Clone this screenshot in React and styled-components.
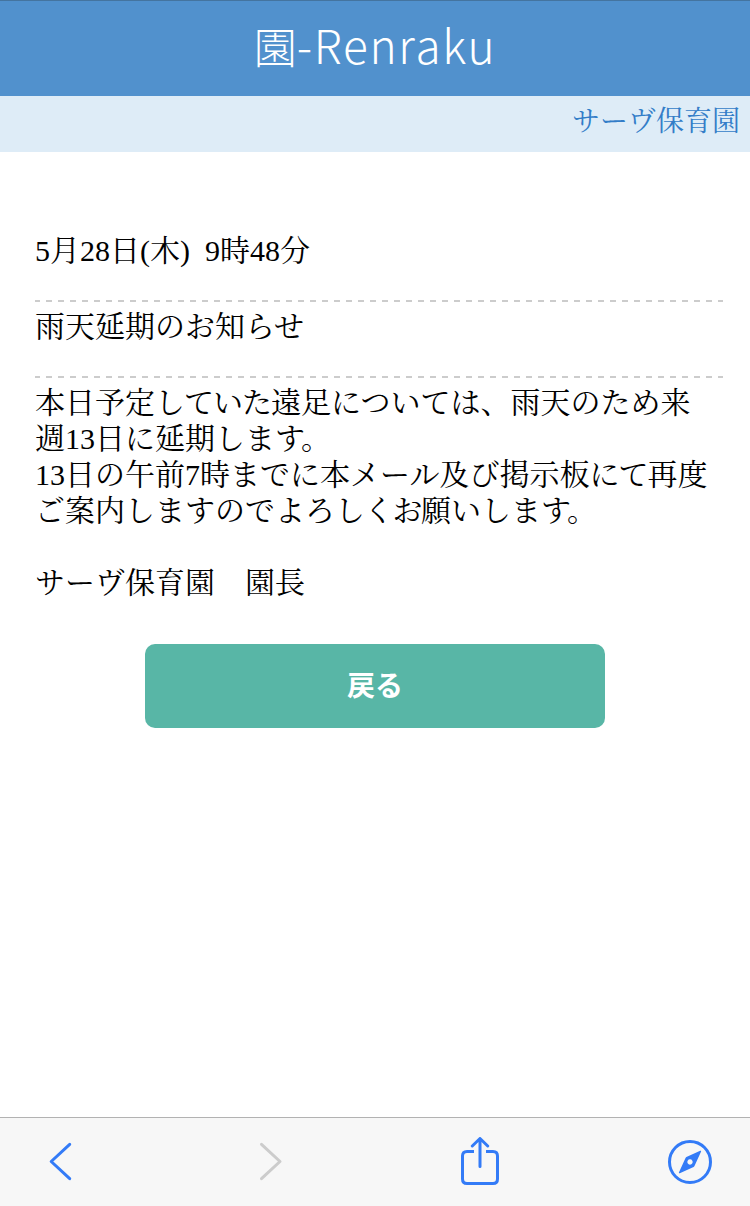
import styled, { createGlobalStyle } from 'styled-components';

const App = () => {
  return (
    <>
      <GlobalStyle />
      <Page>
        <Header>
          <Logo>
            園<LogoLatin>-Renraku</LogoLatin>
          </Logo>
        </Header>
        <SchoolBar>サーヴ保育園</SchoolBar>
        <Content>
          <Row>5月28日(木)&nbsp; 9時48分</Row>
          <Row>雨天延期のお知らせ</Row>
          <Message>
            <p>
              本日予定<Kana>していた</Kana>遠足については、雨天のため来週13日に延期しま
              <Kana $spacing="-4px">す</Kana>。
            </p>
            <p>
              13日の午前7時までに本メール及び掲示板<Kana>にて</Kana>再度ご案内しますのでよろ
              <Kana $spacing="-1.3px">しくお</Kana>願いしま<Kana $spacing="-4px">す</Kana>。
            </p>
            <br />
            <p>サーヴ保育園　園長</p>
          </Message>
          <BackButton type="button">戻る</BackButton>
        </Content>
        <Toolbar>
          <ToolButton aria-label="戻る">
            <svg width="50" height="50" viewBox="0 0 50 50">
              <path d="M34.7 7.3 L16.2 24.5 L34.7 41.7" />
            </svg>
          </ToolButton>
          <ToolButton aria-label="進む" $disabled>
            <svg width="50" height="50" viewBox="0 0 50 50">
              <path d="M16.5 7.3 L35 24.5 L16.5 41.7" />
            </svg>
          </ToolButton>
          <ToolButton aria-label="共有">
            <svg width="50" height="50" viewBox="0 0 50 50">
              <ShareBox d="M19 14.5 H12 Q7.5 14.5 7.5 19 V42 Q7.5 46.5 12 46.5 H38 Q42.5 46.5 42.5 42 V19 Q42.5 14.5 38 14.5 H31" />
              <path d="M25 29.5 V2 M17.3 9 L25 1.5 L32.7 9" />
            </svg>
          </ToolButton>
          <ToolButton aria-label="Safariで開く">
            <svg width="50" height="50" viewBox="0 0 50 50">
              <circle cx="25" cy="25" r="20.5" />
              <Needle d="M35.2 13.8 Q36.6 13.4 36 14.8 L29.6 28.8 Q29.2 29.6 28.6 30 L14.8 36.2 Q13.4 36.6 14 35.2 L20.4 21.2 Q20.8 20.4 21.4 20 Z M25 22.3 a2.7 2.7 0 1 0 0.01 0 Z" />
            </svg>
          </ToolButton>
        </Toolbar>
      </Page>
    </>
  );
};

const GlobalStyle = createGlobalStyle`
  * {
    box-sizing: border-box;
  }
  body {
    margin: 0;
    background-color: #fff;
  }
  p {
    margin: 0;
  }
`;
const Page = styled.div`
  display: flex;
  flex-direction: column;
  width: 750px;
  height: 1206px;
  overflow: hidden;
  color: #000;
  font-family: 'Liberation Serif', 'Noto Serif CJK JP', 'Noto Sans CJK JP', serif;
  font-size: 30px;
  line-height: 36px;
`;
const Header = styled.header`
  display: flex;
  flex-shrink: 0;
  align-items: center;
  justify-content: center;
  height: 96px;
  padding-bottom: 8px;
  border-top: 1px solid #44749f;
  background-color: #5191cd;
`;
const Logo = styled.h1`
  margin: 0;
  color: #fff;
  font-family: 'Noto Sans CJK JP', sans-serif;
  font-size: 43px;
  font-weight: 300;
  line-height: 60px;
`;
const LogoLatin = styled.span`
  font-size: 46px;
  letter-spacing: 1.7px;
`;
const SchoolBar = styled.div`
  flex-shrink: 0;
  height: 56px;
  padding: 8px 10px;
  color: #337dc8;
  background-color: #deecf7;
  font-size: 28px;
  text-align: right;
`;
const Content = styled.main`
  display: flex;
  flex: 1;
  flex-direction: column;
  padding: 74px 27px 0 35px;
`;
const Row = styled.div`
  height: 76px;
  padding-top: 7px;
  background: repeating-linear-gradient(90deg, #ccc 0 5px, transparent 5px 11px, #ccc 11px 12px)
    0 100% / 100% 2px no-repeat;
`;
const Message = styled.div`
  padding: 7px 9px 0 0;
`;
const Kana = styled.span`
  letter-spacing: ${({ $spacing }) => $spacing || '-1px'};
`;
const BackButton = styled.button`
  width: 460px;
  height: 84px;
  margin: 43px 0 0 110px;
  padding: 0 0 4px;
  border: none;
  border-radius: 10px;
  color: #fff;
  background-color: #58b6a6;
  font-family: 'Noto Sans CJK JP', sans-serif;
  font-size: 28px;
  font-weight: 700;
`;
const Toolbar = styled.nav`
  display: flex;
  flex-shrink: 0;
  align-items: center;
  justify-content: space-between;
  height: 89px;
  padding: 0 35px;
  border-top: 1px solid #b2b2b2;
  background-color: #f7f7f7;
`;
const ToolButton = styled.button`
  display: flex;
  padding: 0;
  border: none;
  color: ${({ $disabled }) => ($disabled ? '#ccc' : '#337bf7')};
  background: none;
  > svg {
    fill: none;
    stroke: currentColor;
    stroke-width: 3;
    stroke-linecap: round;
    stroke-linejoin: round;
  }
`;
const ShareBox = styled.path`
  stroke-linecap: butt;
`;
const Needle = styled.path`
  fill: currentColor;
  fill-rule: evenodd;
  stroke: none;
`;

export default App;
